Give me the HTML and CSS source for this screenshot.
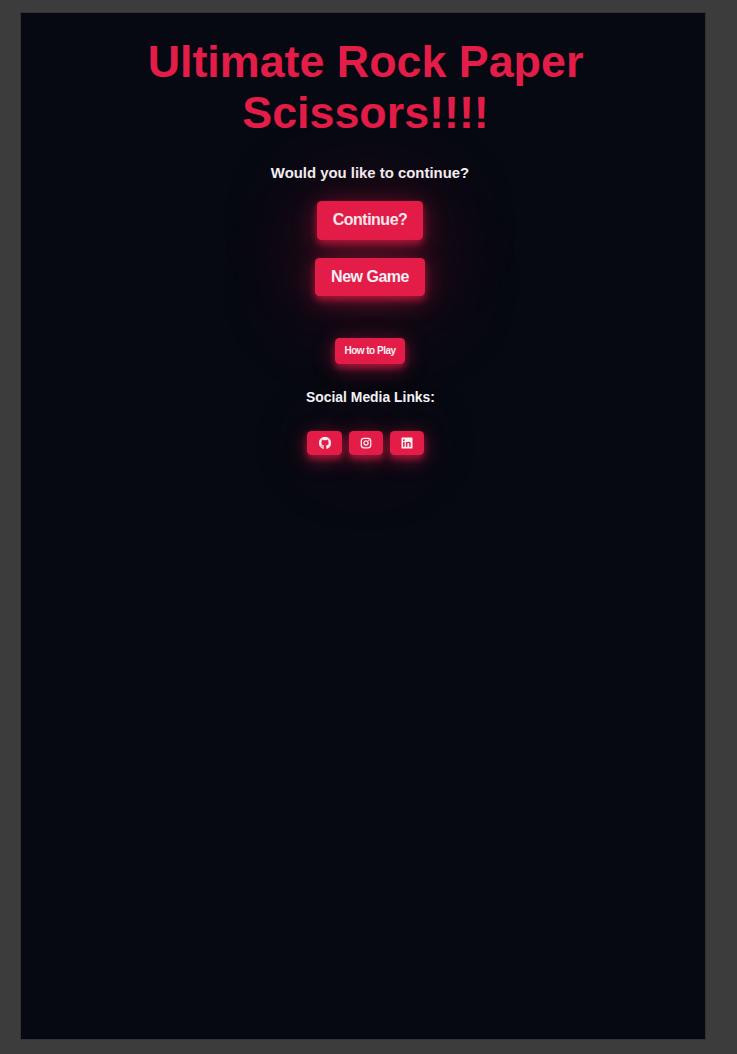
FILE: index.html
```html
<!DOCTYPE html>
<html lang="en">
<head>
<meta charset="utf-8">
<title>Ultimate Rock Paper Scissors</title>
<link rel="stylesheet" href="styles.css">
</head>
<body>
<main class="screen">
  <h1 class="title">Ultimate Rock Paper Scissors!!!!</h1>
  <section class="menu">
    <h2 class="prompt">Would you like to continue?</h2>
    <button class="btn continue">Continue?</button>
    <button class="btn new-game">New Game</button>
    <button class="btn how-to">How to Play</button>
    <h3 class="social-title">Social Media Links:</h3>
    <nav class="social">
      <a class="btn link github" aria-label="GitHub"><svg class="icon mark" viewBox="0 0 16 16"><path d="M8 0C3.58 0 0 3.58 0 8c0 3.54 2.29 6.53 5.47 7.59.4.07.55-.17.55-.38 0-.19-.01-.82-.01-1.49-2.01.37-2.53-.49-2.69-.94-.09-.23-.48-.94-.82-1.13-.28-.15-.68-.52-.01-.53.63-.01 1.08.58 1.23.82.72 1.21 1.87.87 2.33.66.07-.52.28-.87.51-1.07-1.78-.2-3.64-.89-3.64-3.95 0-.87.31-1.59.82-2.15-.08-.2-.36-1.02.08-2.12 0 0 .67-.21 2.2.82.64-.18 1.32-.27 2-.27s1.36.09 2 .27c1.53-1.04 2.2-.82 2.2-.82.44 1.1.16 1.92.08 2.12.51.56.82 1.27.82 2.15 0 3.07-1.87 3.75-3.65 3.95.29.25.54.73.54 1.48 0 1.07-.01 1.93-.01 2.2 0 .21.15.46.55.38A8.01 8.01 0 0 0 16 8c0-4.42-3.58-8-8-8z"/></svg></a>
      <a class="btn link instagram" aria-label="Instagram"><svg class="icon outline" viewBox="0 0 24 24"><rect x="2.5" y="2.5" width="19" height="19" rx="5.5"/><circle cx="12" cy="12" r="4.2"/><circle class="dot" cx="17.6" cy="6.4" r="1.5"/></svg></a>
      <a class="btn link linkedin" aria-label="LinkedIn"><svg class="icon" viewBox="0 0 12 12"><path fill-rule="evenodd" d="M1 .5h10a.5.5 0 0 1 .5.5v10a.5.5 0 0 1-.5.5H1a.5.5 0 0 1-.5-.5V1A.5.5 0 0 1 1 .5zM2.1 4.9v4.9h1.5V4.9zM2.85 2.3a.9.9 0 1 0 0 1.8.9.9 0 0 0 0-1.8zM4.9 4.9v4.9h1.5V7.3c0-.7.3-1.2.95-1.2s.85.5.85 1.2v2.5h1.5V7c0-1.4-.5-2.2-1.8-2.2-.8 0-1.3.35-1.5.8v-.7z"/></svg></a>
    </nav>
  </section>
</main>
</body>
</html>
```
FILE: styles.css
```css
* { box-sizing: border-box; }

body {
  margin: 0;
  height: 1054px;
  padding: 13px 32px 15px 21px;
  overflow: hidden;
  background: #3c3c3c;
  font-family: "Liberation Sans", Arial, sans-serif;
}

.screen {
  width: 684px;
  height: 1026px;
  overflow: hidden;
  padding-top: 23px;
  background: #060912;
  outline: 1px solid #323232;
}

.title {
  width: 480px;
  margin: 0 auto 0 104.5px;
  color: #e31d48;
  font-size: 44.8px;
  line-height: 51px;
  text-align: center;
}

.menu {
  width: 300px;
  margin-left: 199px;
  display: flex;
  flex-direction: column;
  align-items: center;
}

.prompt {
  margin: 26px 0 19px;
  color: #f4f4f6;
  font-size: 14.9px;
  line-height: 18px;
}

.btn {
  display: flex;
  align-items: center;
  justify-content: center;
  padding: 0 0 2px;
  border: 0;
  border-radius: 4.5px;
  background: #e31d48;
  color: #f5f0f4;
  font: bold 16px "Liberation Sans", Arial, sans-serif;
  letter-spacing: -0.5px;
  box-shadow: 0 4px 6px rgba(227, 29, 72, 0.55), 0 4px 20px rgba(227, 29, 72, 0.5);
}

.continue, .new-game {
  box-shadow: 0 4px 7px rgba(227, 29, 72, 0.6), 0 4px 24px rgba(227, 29, 72, 0.42), 0 4px 90px 15px rgba(227, 29, 72, 0.17);
}

.continue { width: 106px; height: 39px; }

.new-game { width: 110px; height: 38px; margin-top: 18px; padding-bottom: 0; }

.how-to {
  width: 70px;
  height: 26px;
  margin-top: 42px;
  padding-bottom: 1px;
  font-size: 10px;
}

.social-title {
  margin: 25px 0 0 1px;
  color: #f4f4f6;
  font-size: 13.9px;
  line-height: 16px;
}

.social {
  display: flex;
  gap: 7px;
  margin: 26.4px 9.6px 0 0;
  border-radius: 4px;
  box-shadow: 0 0 90px rgba(227, 29, 72, 0.14);
}

.link { width: 34px; height: 24px; padding: 0 0 0 1px; }

.github { width: 35px; }

.icon { width: 12px; height: 12px; fill: #f5f0f4; }

.mark { stroke: #f5f0f4; stroke-width: 0.5; }

.outline { fill: none; stroke: #f5f0f4; stroke-width: 2.5; }

.dot { fill: #f5f0f4; stroke: none; }
```
